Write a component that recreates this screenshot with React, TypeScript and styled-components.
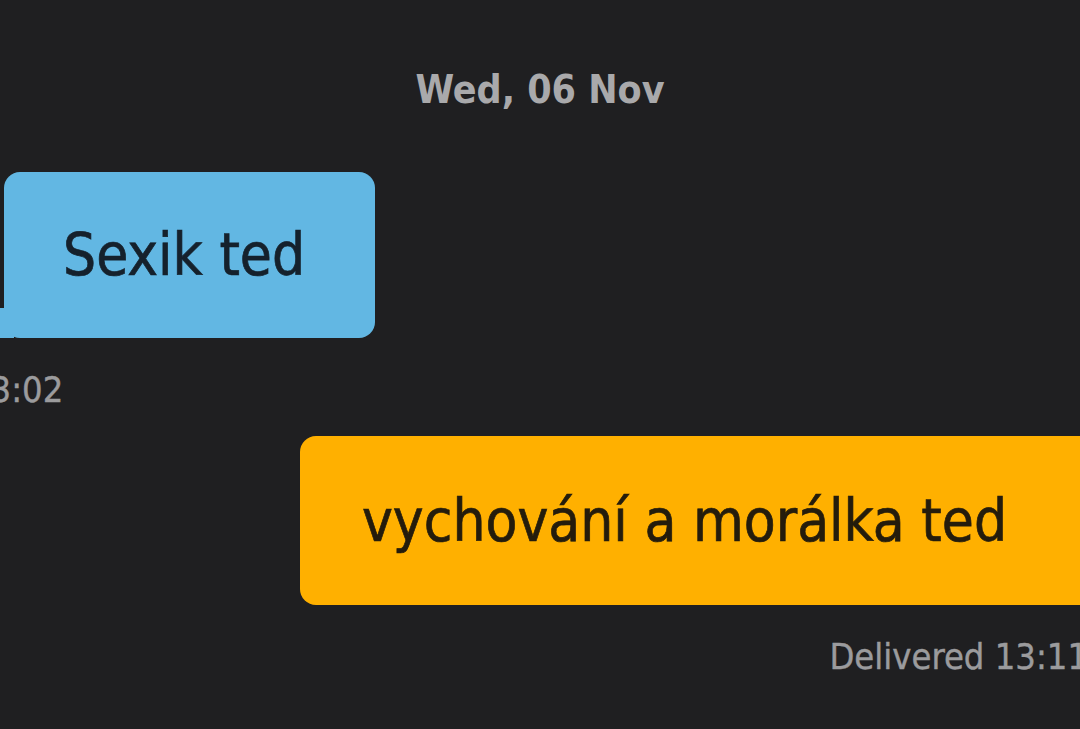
import styled, { createGlobalStyle } from 'styled-components'

const GlobalStyle = createGlobalStyle`
  html, body {
    margin: 0;
    padding: 0;
    background: #1f1f21;
  }
  body {
    font-family: "DejaVu Sans Condensed", "DejaVu Sans", sans-serif;
    font-stretch: condensed;
  }
`

type Message = {
  text: string
  mine?: boolean
  meta: string
}

const messages: Message[] = [
  { text: 'Sexik ted', meta: '13:02' },
  { text: 'vychování a morálka ted', mine: true, meta: 'Delivered 13:11' },
]

export default function App() {
  return (
    <Screen>
      <GlobalStyle />
      <DateLabel>Wed, 06 Nov</DateLabel>
      {messages.map((m, i) => (
        <Row key={i} $mine={m.mine}>
          <Bubble $mine={m.mine}>{m.text}</Bubble>
          <Meta $mine={m.mine}>{m.meta}</Meta>
        </Row>
      ))}
    </Screen>
  )
}

const Screen = styled.div`
  width: 1080px;
  height: 729px;
  overflow: hidden;
  background: #1f1f21;
  display: flex;
  flex-direction: column;
`

const DateLabel = styled.div`
  margin-top: 70px;
  align-self: center;
  font-size: 39px;
  line-height: 39px;
  font-weight: bold;
  color: #a9a9ab;
`

const Row = styled.div<{ $mine?: boolean }>`
  display: flex;
  flex-direction: column;
  align-items: ${p => (p.$mine ? 'flex-end' : 'flex-start')};
  margin-top: ${p => (p.$mine ? '28px' : '63px')};
  margin-right: ${p => (p.$mine ? '-20px' : '0')};
`

const Bubble = styled.div<{ $mine?: boolean }>`
  position: relative;
  box-sizing: border-box;
  border-radius: 16px;
  color: ${p => (p.$mine ? '#241c0c' : '#15212c')};
  background: ${p => (p.$mine ? '#ffb000' : '#62b7e3')};
  font-size: 58px;
  line-height: 1;
  -webkit-text-stroke: 0.7px currentColor;
  height: ${p => (p.$mine ? '169px' : '166px')};
  display: flex;
  align-items: center;
  margin-left: ${p => (p.$mine ? '0' : '4px')};
  width: ${p => (p.$mine ? '800px' : '371px')};
  padding-left: ${p => (p.$mine ? '62px' : '59px')};

  ${p =>
    !p.$mine &&
    `
    &::before {
      content: '';
      position: absolute;
      left: -20px;
      bottom: 0;
      width: 30px;
      height: 30px;
      background: #62b7e3;
      border-top-left-radius: 5px;
    }
  `}
`

const Meta = styled.div<{ $mine?: boolean }>`
  font-size: 36px;
  line-height: 1;
  color: #9b9b9d;
  -webkit-text-stroke: 0.4px currentColor;
  margin-top: 34px;
  margin-left: ${p => (p.$mine ? '0' : '-30px')};
  margin-right: ${p => (p.$mine ? '12px' : '0')};
`
